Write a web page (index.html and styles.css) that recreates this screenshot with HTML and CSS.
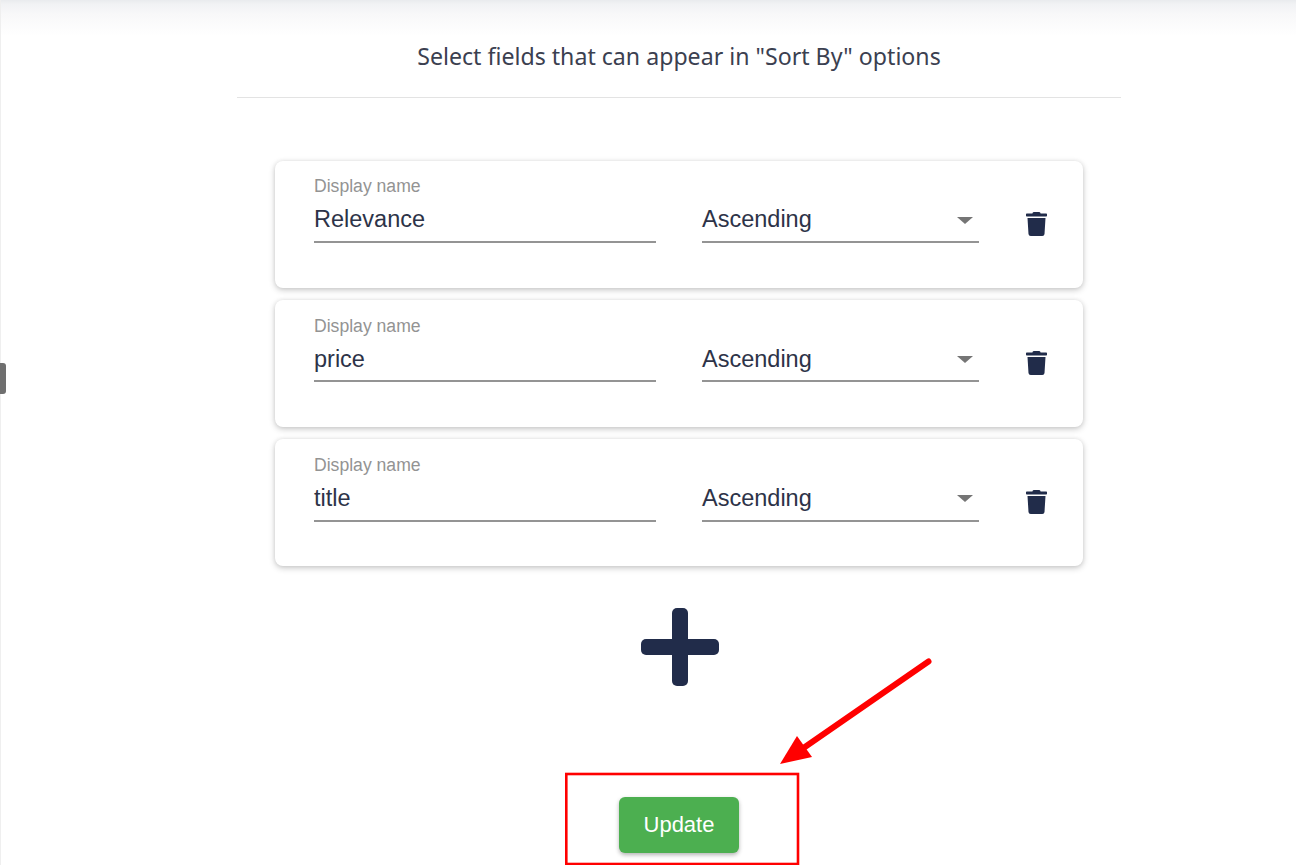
FILE: index.html
```html
<!DOCTYPE html>
<html lang="en">
<head>
  <meta charset="UTF-8">
  <meta name="viewport" content="width=device-width, initial-scale=1.0">
  <title>Sort By options</title>
  <link rel="stylesheet" href="styles.css">
</head>
<body>
  <div class="page">
    <div class="side-tab"></div>

    <main class="content">
      <h2 class="title">Select fields that can appear in "Sort By" options</h2>

      <div class="cards">
        <div class="card">
          <div class="field name-field">
            <label>Display name</label>
            <div class="value">Relevance</div>
          </div>
          <div class="field select-field">
            <div class="value">Ascending<span class="caret"></span></div>
          </div>
          <svg class="trash" viewBox="0 0 448 512"><path d="M432 32H312l-9.4-18.7A24 24 0 0 0 281.1 0H166.8a23.72 23.72 0 0 0-21.4 13.3L136 32H16A16 16 0 0 0 0 48v32a16 16 0 0 0 16 16h416a16 16 0 0 0 16-16V48a16 16 0 0 0-16-16zM53.2 467a48 48 0 0 0 47.9 45h245.8a48 48 0 0 0 47.9-45L416 128H32z"/></svg>
        </div>

        <div class="card">
          <div class="field name-field">
            <label>Display name</label>
            <div class="value">price</div>
          </div>
          <div class="field select-field">
            <div class="value">Ascending<span class="caret"></span></div>
          </div>
          <svg class="trash" viewBox="0 0 448 512"><path d="M432 32H312l-9.4-18.7A24 24 0 0 0 281.1 0H166.8a23.72 23.72 0 0 0-21.4 13.3L136 32H16A16 16 0 0 0 0 48v32a16 16 0 0 0 16 16h416a16 16 0 0 0 16-16V48a16 16 0 0 0-16-16zM53.2 467a48 48 0 0 0 47.9 45h245.8a48 48 0 0 0 47.9-45L416 128H32z"/></svg>
        </div>

        <div class="card">
          <div class="field name-field">
            <label>Display name</label>
            <div class="value">title</div>
          </div>
          <div class="field select-field">
            <div class="value">Ascending<span class="caret"></span></div>
          </div>
          <svg class="trash" viewBox="0 0 448 512"><path d="M432 32H312l-9.4-18.7A24 24 0 0 0 281.1 0H166.8a23.72 23.72 0 0 0-21.4 13.3L136 32H16A16 16 0 0 0 0 48v32a16 16 0 0 0 16 16h416a16 16 0 0 0 16-16V48a16 16 0 0 0-16-16zM53.2 467a48 48 0 0 0 47.9 45h245.8a48 48 0 0 0 47.9-45L416 128H32z"/></svg>
        </div>
      </div>

      <svg class="plus" viewBox="0 0 78 78">
        <rect x="31" y="0" width="16" height="78" rx="5"/>
        <rect x="0" y="31" width="78" height="16" rx="5"/>
      </svg>

      <button class="update">Update</button>
    </main>

    <!-- red annotation drawn on top of the screenshot -->
    <svg class="annotation" viewBox="0 0 1296 865">
      <rect x="566.3" y="774" width="231.7" height="90" fill="none" stroke="#f00" stroke-width="2.6"/>
      <line x1="928.5" y1="661.5" x2="802" y2="749" stroke="#f00" stroke-width="6" stroke-linecap="round"/>
      <polygon points="780,764 797,736 812,757" fill="#f00"/>
    </svg>
  </div>
</body>
</html>
```

FILE: styles.css
```css
* {
  box-sizing: border-box;
}

html, body {
  margin: 0;
  height: 100%;
  overflow: hidden;
}

body {
  font-family: "Liberation Sans", Arial, sans-serif;
  color: #212c4a;
  background: #fff;
}

.page {
  position: relative;
  height: 865px;
  border-left: 1px solid #efefef;
  background: linear-gradient(#e9ebee, #f1f2f4 4px, #f8f8f9 14px, #fff 36px);
}

.side-tab {
  position: absolute;
  left: -1px;
  top: 363px;
  width: 6px;
  height: 31px;
  background: #6f6f6f;
  border-radius: 0 3px 3px 0;
}

.content {
  width: 884px;
  margin-left: 236px;
  display: flex;
  flex-direction: column;
  align-items: center;
}

.title {
  width: 100%;
  margin: 0;
  height: 98px;
  padding-top: 40px;
  border-bottom: 1px solid #e3e3e3;
  text-align: center;
  font-family: "Noto Sans", sans-serif;
  font-size: 23.15px;
  font-weight: 400;
  line-height: 32px;
  color: #3b4050;
}

.cards {
  width: 808px;
  margin-top: 63px;
  display: flex;
  flex-direction: column;
  gap: 12.2px;
}

.card {
  height: 127px;
  padding: 0 36px 0 39px;
  display: flex;
  align-items: flex-start;
  background: #fff;
  border-radius: 8px;
  box-shadow: 0 2px 6px rgba(0, 0, 0, 0.22), 0 0 4px rgba(0, 0, 0, 0.06);
}

.field {
  height: 82.2px;
  display: flex;
  flex-direction: column;
  justify-content: flex-end;
  border-bottom: 2px solid #949494;
}

.name-field {
  width: 342px;
}

.select-field {
  width: 277px;
  margin-left: 46px;
}

.field label {
  margin-bottom: 4.8px;
  font-size: 17.6px;
  line-height: 20px;
  color: #939393;
}

.value {
  position: relative;
  font-size: 23.5px;
  line-height: 28px;
  padding: 4.2px 0 7.8px;
  color: #2d3348;
}

.caret {
  position: absolute;
  right: 6px;
  top: 15.5px;
  border-left: 8px solid transparent;
  border-right: 8px solid transparent;
  border-top: 7px solid #757575;
}

.trash {
  width: 21px;
  height: 24px;
  margin: 51px 0 0 47px;
  fill: #212c4a;
}

.plus {
  width: 78px;
  height: 78px;
  margin: 41.6px 0 0 1px;
  fill: #212c4a;
}

.update {
  width: 120px;
  height: 56px;
  margin-top: 111px;
  border: 0;
  border-radius: 6px;
  background: #4caf50;
  color: #fff;
  font-family: inherit;
  font-size: 22px;
  box-shadow: 0 2px 4px rgba(0, 0, 0, 0.3);
}

.annotation {
  position: absolute;
  left: -1px;
  top: 0;
  width: 1296px;
  height: 865px;
  pointer-events: none;
}
```
